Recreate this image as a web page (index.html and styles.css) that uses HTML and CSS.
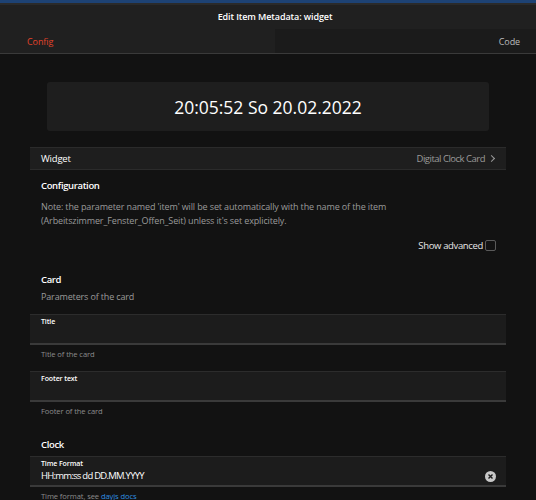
FILE: index.html
```html
<!DOCTYPE html>
<html lang="en">
<head>
  <meta charset="UTF-8">
  <meta name="viewport" content="width=device-width, initial-scale=1.0">
  <title>Edit Item Metadata: widget</title>
  <link rel="stylesheet" href="styles.css">
</head>
<body>
  <div class="top-strip"></div>
  <header class="navbar">
    <div class="nav-title">Edit Item Metadata: widget</div>
    <div class="tabs">
      <a class="tab active">Config</a>
      <a class="tab right">Code</a>
    </div>
  </header>

  <main class="page">
    <div class="preview">
      <div class="clock">20:05:52 So 20.02.2022</div>
    </div>

    <div class="list-row">
      <span>Widget</span>
      <span class="after">Digital Clock Card <span class="chevron"></span></span>
    </div>

    <div class="block-title first">Configuration</div>
    <p class="note">Note: the parameter named 'item' will be set automatically with the name of the item (Arbeitszimmer_Fenster_Offen_Seit) unless it's set explicitely.</p>

    <div class="advanced">
      <span>Show advanced</span>
      <span class="checkbox"></span>
    </div>

    <div class="block-title">Card</div>
    <div class="block-desc">Parameters of the card</div>

    <div class="field">
      <div class="field-label">Title</div>
      <div class="field-value"></div>
    </div>
    <div class="field-hint">Title of the card</div>

    <div class="field">
      <div class="field-label">Footer text</div>
      <div class="field-value"></div>
    </div>
    <div class="field-hint">Footer of the card</div>

    <div class="block-title clock-title">Clock</div>
    <div class="field">
      <div class="field-label">Time Format</div>
      <div class="field-value">HH:mm:ss dd DD.MM.YYYY
        <span class="clear">
          <svg width="11" height="11" viewBox="0 0 11 11">
            <circle cx="5.5" cy="5.5" r="5.5" fill="#c8c8c8"/>
            <path d="M3.5 3.5 L7.5 7.5 M7.5 3.5 L3.5 7.5" stroke="#1c1c1c" stroke-width="1.4"/>
          </svg>
        </span>
      </div>
    </div>
    <div class="field-hint">Time format, see <a class="link">dayjs docs</a></div>
  </main>
</body>
</html>
```

FILE: styles.css
```css
body {
  margin: 0;
  padding: 0;
  background-color: #121212;
  color: #fff;
  font-family: "Open Sans", "Noto Sans", sans-serif;
  overflow: hidden;
}

.top-strip {
  width: 550px;
  height: 3px;
  background-color: #1d4274;
  border-bottom: 2px solid #2a2a2a;
}

.navbar {
  width: 550px;
  background-color: #202020;
  border-bottom: 1px solid #3a3a3a;
}

.nav-title {
  height: 24px;
  line-height: 24px;
  text-align: center;
  font-size: 9px;
  font-weight: 600;
  letter-spacing: -0.1px;
}

.tabs {
  display: flex;
  height: 24px;
}

.tab {
  flex: 1;
  line-height: 26px;
  font-size: 9px;
  letter-spacing: -0.1px;
  color: #bbb;
  padding: 0 30px 0 27px;
}

.tab.active {
  color: #e2432a;
}

.tab.right {
  background-color: #1b1b1b;
  text-align: right;
}

.page {
  padding: 28px 30px 0 30px;
}

.preview {
  padding: 0 17px;
}

.clock {
  height: 49px;
  line-height: 50px;
  background-color: #1e1e1e;
  border-radius: 3px;
  text-align: center;
  font-size: 17.5px;
}

.list-row {
  margin-top: 16px;
  height: 21px;
  display: flex;
  align-items: center;
  justify-content: space-between;
  padding: 0 10px 0 11px;
  background-color: #1e1e1e;
  border-top: 1px solid #2b2b2b;
  border-bottom: 1px solid #2b2b2b;
  font-size: 9.5px;
  letter-spacing: -0.2px;
}

.after {
  color: #9a9a9a;
  display: flex;
  align-items: center;
  gap: 4px;
  letter-spacing: -0.5px;
}

.chevron {
  width: 4px;
  height: 4px;
  border-top: 1px solid #9a9a9a;
  border-right: 1px solid #9a9a9a;
  transform: rotate(45deg);
  margin-right: 2px;
}

.block-title {
  margin-top: 21px;
  padding-left: 11px;
  font-size: 9.5px;
  font-weight: 600;
  letter-spacing: -0.35px;
  line-height: 14px;
}

.block-title.first {
  margin-top: 9px;
}

.block-title.clock-title {
  margin-top: 21px;
}

.note {
  margin: 7px 0 0;
  padding-left: 11px;
  font-size: 9px;
  letter-spacing: -0.13px;
  line-height: 14px;
  color: #9a9a9a;
}

.advanced {
  display: flex;
  justify-content: flex-end;
  align-items: center;
  gap: 2px;
  margin-top: 11px;
  padding-right: 10px;
  font-size: 9.5px;
  letter-spacing: -0.35px;
  color: #e6e6e6;
}

.checkbox {
  width: 9px;
  height: 9px;
  border: 1px solid #5a5a5a;
  border-radius: 2px;
}

.block-desc {
  padding-left: 11px;
  margin-top: 3px;
  font-size: 9px;
  letter-spacing: -0.15px;
  line-height: 14px;
  color: #9a9a9a;
}

.field {
  margin-top: 11px;
  height: 27px;
  padding: 1px 10px 0 11px;
  background-color: #1c1c1c;
  border-top: 1px solid #2c2c2c;
  border-bottom: 2px solid #3a3a3a;
}

.block-desc + .field {
  margin-top: 10px;
}

.block-title + .field {
  margin-top: 4px;
}

.field-label {
  font-size: 7px;
  font-weight: 600;
  letter-spacing: -0.1px;
  line-height: 11px;
}

.field-value {
  display: flex;
  align-items: center;
  justify-content: space-between;
  font-size: 9.5px;
  letter-spacing: -0.75px;
  line-height: 14px;
}

.clear {
  display: flex;
}

.field-hint {
  padding-left: 11px;
  margin-top: 3px;
  font-size: 7.6px;
  letter-spacing: -0.1px;
  line-height: 12px;
  color: #8c8c8c;
}

.link {
  color: #2f8ee0;
}
```
